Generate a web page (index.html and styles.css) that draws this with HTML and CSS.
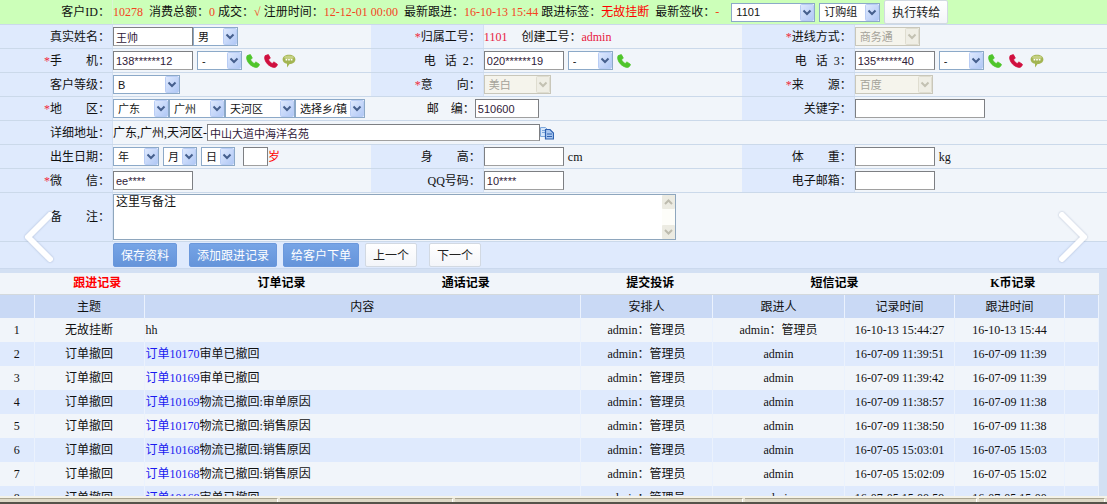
FILE: index.html
```html
<!DOCTYPE html>
<html lang="zh-CN">
<head>
<meta charset="utf-8">
<title>客户资料</title>
<link rel="stylesheet" href="styles.css">
</head>
<body>
<svg class="defs" aria-hidden="true">
  <symbol id="phone" viewBox="0 0 14 14"><path d="M1.200 1.600 4.400.6 6.300 4 4.600 5.800C5.200 7.200 6.500 8.700 8.200 9.500L9.900 7.900 13.400 10.300C13.200 12.200 11.700 13.600 9.800 13.400 4.800 12.600.7 8 .6 3.400Z" fill="currentColor" stroke="currentColor" stroke-width=".8" stroke-linejoin="round"/></symbol>
  <symbol id="sms" viewBox="0 0 14 14"><path d="M7 .8C10.600.8 13.400 2.700 13.400 5.400S10.600 10 7.600 10L5 13.400 5 9.800C2.300 9.300.6 7.600.6 5.400.6 2.700 3.400.8 7 .8Z" fill="#a3b552"/><ellipse cx="7" cy="3.400" rx="4.800" ry="1.800" fill="#c5d084"/><path d="M3.600 5.800h1.600M6.200 5.800h1.600M8.800 5.800h1.600" stroke="#fff" stroke-width="1.400"/></symbol>
</svg>
<main class="page">
  <form class="customer">
    <div class="row summary">
      <div class="label">客户ID：</div>
      <div class="value">
        <p class="facts"><b>10278</b><span>消费总额：</span><i>0</i> 成交：<i>√</i> 注册时间：<b>12-12-01 00:00</b><span>最新跟进：</span><b class="tight">16-10-13 15:44</b>跟进标签：<em>无故挂断</em><span>最新签收：</span><i>-</i></p>
        <select class="w84" aria-label="转给工号"><option>1101</option></select>
        <select class="w61" aria-label="转给小组"><option>订购组</option></select>
        <button type="button" class="btn plain">执行转给</button>
      </div>
    </div>

    <div class="row thirds">
      <div class="field"><label class="label" for="name">真实姓名：</label><div class="value joined"><input id="name" class="w80" value="王帅"><select class="w45" aria-label="性别"><option>男</option></select></div></div>
      <div class="field"><div class="label"><s>*</s>归属工号：</div><div class="value facts-inline"><b>1101</b><span>创建工号：<b>admin</b></span></div></div>
      <div class="field"><label class="label" for="channel"><s>*</s>进线方式：</label><div class="value"><select id="channel" class="w65" disabled><option>商务通</option></select></div></div>
    </div>

    <div class="row thirds">
      <div class="field"><label class="label" for="mobile"><s>*</s>手　　机：</label><div class="value"><input id="mobile" class="w80" value="138******12"><select class="w45" aria-label="手机状态"><option>-</option></select>
        <a href="#call" class="icon green" aria-label="拨打"><svg><use href="#phone"/></svg></a><a href="#hang" class="icon red" aria-label="挂断"><svg><use href="#phone"/></svg></a><a href="#sms" class="icon" aria-label="短信"><svg><use href="#sms"/></svg></a></div></div>
      <div class="field"><label class="label" for="tel2">电&nbsp;&nbsp; 话&nbsp; 2：</label><div class="value"><input id="tel2" class="w80" value="020******19"><select class="w45" aria-label="电话2状态"><option>-</option></select>
        <a href="#call2" class="icon green" aria-label="拨打"><svg><use href="#phone"/></svg></a></div></div>
      <div class="field"><label class="label" for="tel3">电&nbsp;&nbsp; 话&nbsp; 3：</label><div class="value wide-icons"><input id="tel3" class="w80" value="135******40"><select class="w45" aria-label="电话3状态"><option>-</option></select>
        <a href="#call3" class="icon green" aria-label="拨打"><svg><use href="#phone"/></svg></a><a href="#hang3" class="icon red" aria-label="挂断"><svg><use href="#phone"/></svg></a><a href="#sms3" class="icon" aria-label="短信"><svg><use href="#sms"/></svg></a></div></div>
    </div>

    <div class="row thirds">
      <div class="field"><label class="label" for="level">客户等级：</label><div class="value"><select id="level" class="w68"><option>B</option></select></div></div>
      <div class="field"><label class="label" for="intent"><s>*</s>意　　向：</label><div class="value"><select id="intent" class="w68" disabled><option>美白</option></select></div></div>
      <div class="field"><label class="label" for="source"><s>*</s>来　　源：</label><div class="value"><select id="source" class="w78" disabled><option>百度</option></select></div></div>
    </div>

    <div class="row thirds">
      <div class="field"><label class="label" for="province"><s>*</s>地　　区：</label><div class="value joined"><select id="province" class="w56"><option>广东</option></select><select class="w56" aria-label="城市"><option>广州</option></select><select class="w70" aria-label="区县"><option>天河区</option></select><select class="w70" aria-label="乡镇"><option>选择乡/镇</option></select></div></div>
      <div class="field bare"><label class="label" for="zip">邮　编：</label><div class="value"><input id="zip" class="w64" value="510600"></div></div>
      <div class="field"><label class="label" for="keyword">关键字：</label><div class="value"><input id="keyword" class="w130"></div></div>
    </div>

    <div class="row">
      <label class="label" for="address">详细地址：</label>
      <div class="value joined"><span>广东,广州,天河区-</span><input id="address" class="address" value="中山大道中海洋名苑"><a href="#copy" class="icon" aria-label="复制"><svg viewBox="0 0 14 14"><path d="M.5 1.500h5L8 4v6.500H.5Z" fill="#d5e6fa" stroke="#7ea8dc"/><path d="M2 4.500h3M2 6.500h3" stroke="#7ea8dc"/><path d="M5.500 3.500h4.500L13.500 7v6H5.500Z" fill="#a9c7f0" stroke="#2f62b0" stroke-width="1.200"/><path d="M7 8h5M7 10.500h5" stroke="#2f62b0"/></svg></a></div>
    </div>

    <div class="row thirds">
      <div class="field"><label class="label" for="year">出生日期：</label><div class="value"><select id="year" class="w46"><option>年</option></select><select class="w34" aria-label="月"><option>月</option></select><select class="w34" aria-label="日"><option>日</option></select><span class="age"><input id="age" class="w25" aria-label="岁"><label for="age">岁</label></span></div></div>
      <div class="field"><label class="label" for="height">身　　高：</label><div class="value"><input id="height" class="w80"><span>cm</span></div></div>
      <div class="field"><label class="label" for="weight">体　　重：</label><div class="value"><input id="weight" class="w80"><span>kg</span></div></div>
    </div>

    <div class="row thirds">
      <div class="field"><label class="label" for="wechat"><s>*</s>微　　信：</label><div class="value"><input id="wechat" class="w80" value="ee****"></div></div>
      <div class="field"><label class="label" for="qq">QQ号码：</label><div class="value"><input id="qq" class="w80" value="10****"></div></div>
      <div class="field"><label class="label" for="email">电子邮箱：</label><div class="value"><input id="email" class="w80"></div></div>
    </div>

    <div class="row remark">
      <label class="label" for="remark">备　　注：</label>
      <div class="value"><div class="memo"><textarea id="remark">这里写备注</textarea><span class="scroll" aria-hidden="true"><svg viewBox="0 0 13 14"><path d="M3 9l3.500-3.500L10 9"/></svg><svg viewBox="0 0 13 14"><path d="M3 5l3.500 3.500L10 5"/></svg></span></div></div>
    </div>

    <div class="row actions">
      <div class="label"></div>
      <div class="value"><button type="button" class="btn blue save">保存资料</button><button type="button" class="btn blue">添加跟进记录</button><button type="button" class="btn blue">给客户下单</button><button type="button" class="btn plain prev">上一个</button><button type="button" class="btn plain">下一个</button></div>
    </div>

    <button type="button" class="slide left" aria-label="上一页"><svg viewBox="0 0 32 56"><path d="M27 6 5 28 27 50"/></svg></button>
    <button type="button" class="slide right" aria-label="下一页"><svg viewBox="0 0 32 56"><path d="M5 6 27 28 5 50"/></svg></button>
  </form>

  <section class="records">
    <div class="panel">
      <nav class="tabs"><a href="#t1" class="active">跟进记录</a><a href="#t2">订单记录</a><a href="#t3">通话记录</a><a href="#t4">提交投诉</a><a href="#t5">短信记录</a><a href="#t6">K币记录</a></nav>
      <table>
        <colgroup><col class="c-no"><col class="c-time"><col><col class="c-user"><col class="c-user"><col class="c-time"><col class="c-time"><col class="c-no"></colgroup>
        <thead><tr><th></th><th>主题</th><th>内容</th><th>安排人</th><th>跟进人</th><th>记录时间</th><th>跟进时间</th><th></th></tr></thead>
        <tbody>
          <tr><td>1</td><td>无故挂断</td><td>hh</td><td>admin：管理员</td><td>admin：管理员</td><td>16-10-13 15:44:27</td><td>16-10-13 15:44</td><td></td></tr>
          <tr><td>2</td><td>订单撤回</td><td><a href="#o">订单10170</a>审单已撤回</td><td>admin：管理员</td><td>admin</td><td>16-07-09 11:39:51</td><td>16-07-09 11:39</td><td></td></tr>
          <tr><td>3</td><td>订单撤回</td><td><a href="#o">订单10169</a>审单已撤回</td><td>admin：管理员</td><td>admin</td><td>16-07-09 11:39:42</td><td>16-07-09 11:39</td><td></td></tr>
          <tr><td>4</td><td>订单撤回</td><td><a href="#o">订单10169</a>物流已撤回:审单原因</td><td>admin：管理员</td><td>admin</td><td>16-07-09 11:38:57</td><td>16-07-09 11:38</td><td></td></tr>
          <tr><td>5</td><td>订单撤回</td><td><a href="#o">订单10170</a>物流已撤回:销售原因</td><td>admin：管理员</td><td>admin</td><td>16-07-09 11:38:50</td><td>16-07-09 11:38</td><td></td></tr>
          <tr><td>6</td><td>订单撤回</td><td><a href="#o">订单10168</a>物流已撤回:销售原因</td><td>admin：管理员</td><td>admin</td><td>16-07-05 15:03:01</td><td>16-07-05 15:03</td><td></td></tr>
          <tr><td>7</td><td>订单撤回</td><td><a href="#o">订单10168</a>物流已撤回:销售原因</td><td>admin：管理员</td><td>admin</td><td>16-07-05 15:02:09</td><td>16-07-05 15:02</td><td></td></tr>
          <tr><td>8</td><td>订单撤回</td><td><a href="#o">订单10168</a>审单已撤回</td><td>admin：管理员</td><td>admin</td><td>16-07-05 15:00:59</td><td>16-07-05 15:00</td><td></td></tr>
        </tbody>
      </table>
    </div>
  </section>
  <footer class="statusbar"><span></span><span></span><span></span><span></span><span></span></footer>
</main>
</body>
</html>
```
FILE: styles.css
```css
* { box-sizing: border-box; }
body, input, select, textarea, button {
  font-family: "Liberation Serif", "Noto Sans CJK SC", serif;
  font-size: 12px;
}
body { margin: 0; color: #111; line-height: 16px; background: #f1f5fa; }
.defs { position: absolute; width: 0; height: 0; }
.page { display: flex; flex-direction: column; height: 100vh; overflow: hidden; }
.customer { position: relative; flex: none; }

.row { display: flex; min-height: 24px; border-bottom: 1px solid #cbd9ea; }
.thirds { display: grid; grid-template-columns: 67fr 67fr 66fr; }
.field { display: flex; min-width: 0; }
.label {
  flex: none;
  display: flex;
  align-items: center;
  justify-content: flex-end;
  width: 113px;
  padding-right: 2px;
  background: #dfeafd;
  border-right: 1px solid #d3e0f3;
  white-space: nowrap;
}
.label s { color: #f0283c; text-decoration: none; }
.value { flex: 1; display: flex; align-items: center; gap: 4px; min-width: 0; white-space: nowrap; }
.joined { gap: 0; }
.bare .label { width: 104px; background: none; border: 0; padding-right: 0; }

.summary { min-height: 25px; background: #ccffb9; }
.summary .label { background: none; border-color: #d9f5d4; }
.facts { margin: 0 8px 0 0; }
.facts span { margin-left: 6px; }
b, i, em { font-weight: normal; font-style: normal; color: #f4441f; }
em { color: #f00; }
.facts .tight { margin-right: 3px; }
.facts-inline { gap: 14px; }
.facts-inline b { color: #e8193f; }

input, select {
  height: 19px;
  margin: 0;
  padding: 0 2px;
  border: 1px solid #7d7f83;
  border-radius: 0;
  background: #fff;
  color: #302038;
  font-family: "Liberation Sans", "Noto Sans CJK SC", sans-serif;
  font-size: 11px;
}
input { border-bottom-color: #a0a0a0; }
select {
  appearance: none;
  padding: 0 16px 0 4px;
  border-color: #8ca9c8;
  color: #151515;
  background: #fff url("data:image/svg+xml,%3Csvg xmlns='http://www.w3.org/2000/svg' width='14' height='17'%3E%3Cdefs%3E%3ClinearGradient id='g' x2='1' y2='1'%3E%3Cstop stop-color='%23e0eafe'/%3E%3Cstop offset='1' stop-color='%23afc7f5'/%3E%3C/linearGradient%3E%3C/defs%3E%3Crect x='.5' y='.5' width='13' height='16' rx='1' fill='url(%23g)' stroke='%23b9cdf5'/%3E%3Cpath d='M3.500 6.500 7 10l3.500-3.500' fill='none' stroke='%23455f8d' stroke-width='2'/%3E%3C/svg%3E") right center no-repeat;
}
select:disabled {
  opacity: 1;
  color: #a5a39a;
  border-color: #c9c7ba;
  background: #f5f4ec url("data:image/svg+xml,%3Csvg xmlns='http://www.w3.org/2000/svg' width='14' height='17'%3E%3Crect x='.5' y='.5' width='13' height='16' rx='1' fill='%23efeee5' stroke='%23dfddd0'/%3E%3Cpath d='M3.500 6.500 7 10l3.500-3.500' fill='none' stroke='%23c3c1b2' stroke-width='2'/%3E%3C/svg%3E") right center no-repeat;
}
.w25 { width: 25px; }
.w34 { width: 34px; }
.w45 { width: 45px; }
.w46 { width: 46px; }
.w56 { width: 56px; }
.w61 { width: 61px; }
.w64 { width: 64px; }
.w65 { width: 65px; }
.w68 { width: 67px; }
.w70 { width: 70px; }
.w78 { width: 78px; }
.w80 { width: 80px; }
.w84 { width: 84px; }
.w130 { width: 130px; }
.address { flex: 0 1 333px; height: 17px; }
.age { margin-left: 4px; }
.age label { color: #f00; }

.icon { flex: none; display: block; width: 14px; height: 14px; }
.wide-icons .icon + .icon { margin-left: 3px; }
.icon svg { display: block; width: 100%; height: 100%; fill: none; }
.green { color: #4fc52b; }
.red { color: #d0103f; }

.remark { min-height: 49px; }
.memo { position: relative; flex: 0 1 563px; height: 46px; }
textarea {
  display: block;
  width: 100%;
  height: 100%;
  margin: 0;
  padding: 0 18px 0 2px;
  border: 1px solid #8ea6bd;
  resize: none;
  overflow: hidden;
  color: #111;
  line-height: 14px;
}
.scroll {
  position: absolute;
  inset: 1px 1px 1px auto;
  width: 13px;
  display: flex;
  flex-direction: column;
  justify-content: space-between;
  background: #fdfdf9;
}
.scroll svg { height: 14px; background: #ecebe2; border-radius: 1px; fill: none; stroke: #bdbbae; stroke-width: 2; }

.btn { height: 24px; padding: 0 7px; border: 1px solid #6b98dc; border-radius: 2px; white-space: nowrap; }
.blue { background: linear-gradient(#76a4e6, #6594da); color: #fff; }
.plain { background: linear-gradient(#fff, #f3f5f9); border-color: #d2d9e2; color: #222; }
.actions { min-height: 27px; background: #dfeafd; border-bottom-color: #cbd9ee; }
.actions .label { border: 0; }
.actions .value { gap: 6px; }
.save, .prev { margin-right: 6px; }

.slide { position: absolute; bottom: 4px; width: 32px; height: 56px; padding: 0; border: 0; background: none; }
.slide svg { display: block; width: 100%; height: 100%; fill: none; stroke: #fff; stroke-width: 6; stroke-linecap: round; stroke-linejoin: round; filter: drop-shadow(0 0 1px rgba(90, 110, 150, .4)); }
.left { left: 23px; }
.right { right: 18px; }

.records { flex: 1; min-height: 0; overflow: hidden; padding: 4px 8px 0 0; background: #d3e0f3; }
.panel { min-height: 100%; background: #f1f5fa; }
.tabs { display: grid; grid-template-columns: repeat(5, 184fr) 172fr; padding-left: 5px; line-height: 21px; border-bottom: 1px solid #d3d9dd; text-align: center; font-weight: bold; }
.tabs a { color: #000; text-decoration: none; }
.tabs .active { color: #f00; }
table { width: 100%; table-layout: fixed; border-collapse: collapse; }
.c-no { width: 34px; }
.c-time { width: 110px; }
.c-user { width: 132px; }
th, td { height: 24px; padding: 0; text-align: center; font-weight: normal; white-space: nowrap; border-right: 1px solid #ebf2fd; }
th { height: 23px; background: #c9d9f5; }
td:nth-child(3) { text-align: left; padding-left: 1px; }
tbody tr:nth-child(even) { background: #dfeafd; }
td a { color: #1a1af0; text-decoration: none; }

.statusbar { flex: none; display: grid; grid-template-columns: 280fr 175fr 290fr 234fr 128fr; height: 8px; border-top: 2px solid #f4f2e8; border-bottom: 2px solid #55534a; background: #e9e5d5; }
.statusbar span { margin-right: 2px; border-top: 1px solid #aaa693; border-right: 1px solid #fff; background: #ddd8c6; }
```
